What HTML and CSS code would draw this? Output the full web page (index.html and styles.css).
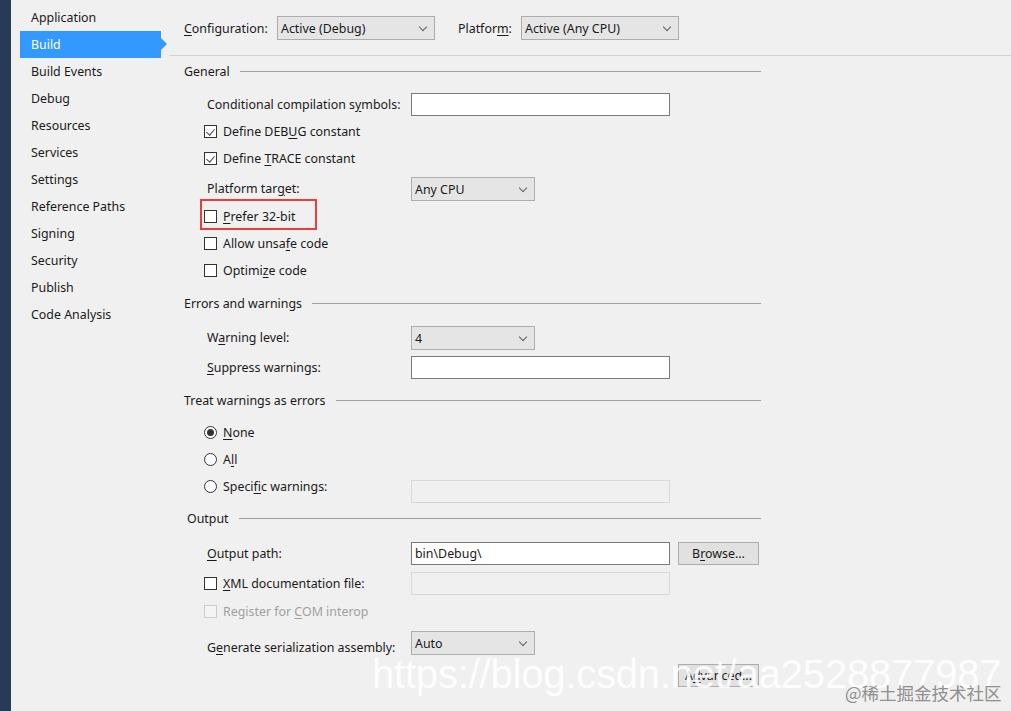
FILE: index.html
```html
<!DOCTYPE html>
<html lang="en">
<head>
  <meta charset="UTF-8">
  <title>Build</title>
  <link rel="stylesheet" href="styles.css">
</head>
<body>
  <div class="rail"></div>

  <ul class="nav">
    <li>Application</li>
    <li class="on">Build</li>
    <li>Build Events</li>
    <li>Debug</li>
    <li>Resources</li>
    <li>Services</li>
    <li>Settings</li>
    <li>Reference Paths</li>
    <li>Signing</li>
    <li>Security</li>
    <li>Publish</li>
    <li>Code Analysis</li>
  </ul>

  <div class="main">
    <div class="toolbar">
      <span class="lbl-conf"><u>C</u>onfiguration:</span>
      <div class="select wide">Active (Debug)<i class="chev"></i></div>
      <span class="lbl-plat">Platfor<u>m</u>:</span>
      <div class="select wide">Active (Any CPU)<i class="chev"></i></div>
    </div>
    <div class="divider"></div>

    <div class="head first">General</div>
    <div class="row gap6">
      <span class="lbl">Conditional compilation s<u>y</u>mbols:</span>
      <div class="input"></div>
    </div>
    <div class="row chk"><span class="box checked"></span><span>Define DEB<u>U</u>G constant</span></div>
    <div class="row chk"><span class="box checked"></span><span>Define <u>T</u>RACE constant</span></div>
    <div class="row gap3">
      <span class="lbl">Platform tar<u>g</u>et:</span>
      <div class="select">Any CPU<i class="chev"></i></div>
    </div>
    <div class="row chk gap1"><span class="flag"><span class="box"></span><span><u>P</u>refer 32-bit</span></span></div>
    <div class="row chk"><span class="box"></span><span>Allow unsa<u>f</u>e code</span></div>
    <div class="row chk"><span class="box"></span><span>Optimi<u>z</u>e code</span></div>

    <div class="head gap6">Errors and warnings</div>
    <div class="row gap7">
      <span class="lbl">W<u>a</u>rning level:</span>
      <div class="select">4<i class="chev"></i></div>
    </div>
    <div class="row gap3">
      <span class="lbl"><u>S</u>uppress warnings:</span>
      <div class="input"></div>
    </div>

    <div class="head gap6">Treat warnings as errors</div>
    <div class="row chk gap5"><span class="radio checked"></span><span><u>N</u>one</span></div>
    <div class="row chk"><span class="radio"></span><span>A<u>l</u>l</span></div>
    <div class="row chk">
      <span class="lbl-chk"><span class="radio"></span><span>Speci<u>f</u>ic warnings:</span></span>
      <div class="input off low"></div>
    </div>

    <div class="head out gap5">Output</div>
    <div class="row gap8">
      <span class="lbl"><u>O</u>utput path:</span>
      <div class="input">bin\Debug\</div>
      <div class="btn">B<u>r</u>owse...</div>
    </div>
    <div class="row chk gap3">
      <span class="lbl-chk"><span class="box"></span><span><u>X</u>ML documentation file:</span></span>
      <div class="input off"></div>
    </div>
    <div class="row chk gap1 dim"><span class="box off"></span><span>Register for <u>C</u>OM interop</span></div>
    <div class="row gap4">
      <span class="lbl low">G<u>e</u>nerate serialization assembly:</span>
      <div class="select">Auto<i class="chev"></i></div>
    </div>
    <div class="row gap6 right">
      <div class="btn">A<u>d</u>vanced...</div>
    </div>
  </div>

  <div class="watermark">https://blog.csdn.net/aa2528877987</div>
  <div class="credit">@稀土掘金技术社区</div>
</body>
</html>
```

FILE: styles.css
```css
* { margin: 0; padding: 0; box-sizing: border-box; }

body {
  width: 1011px;
  height: 711px;
  overflow: hidden;
  display: flex;
  background: #f0f0f0;
  color: #1a1a1a;
  font-family: "Noto Sans", "Noto Sans CJK SC", sans-serif;
  font-size: 12.4px;
  position: relative;
}

u { text-underline-offset: 2px; }

.rail {
  width: 11px;
  background: #283a56;
  flex: none;
}

/* left navigation */
.nav {
  list-style: none;
  width: 159px;
  flex: none;
  padding: 4px 0 0 9px;
}
.nav li {
  height: 27px;
  line-height: 27px;
  width: 141px;
  padding-left: 11px;
  position: relative;
}
.nav li.on {
  background: #3399ff;
  color: #fff;
}
.nav li.on:after {
  content: '';
  position: absolute;
  right: -6px;
  top: 7px;
  border-left: 6px solid #3399ff;
  border-top: 6px solid transparent;
  border-bottom: 6px solid transparent;
}

/* property page */
.main {
  flex: 1;
  display: flex;
  flex-direction: column;
}

.toolbar {
  display: flex;
  align-items: center;
  padding: 16px 0 0 14px;
}
.lbl-conf { width: 93px; }
.lbl-plat { width: 63px; margin-left: 23px; }

.divider {
  margin-top: 15px;
  height: 1px;
  background: #d2d2d2;
}

.head {
  height: 27px;
  width: 591px;
  padding-left: 14px;
  display: flex;
  align-items: center;
  gap: 10px;
}
.head:after {
  content: '';
  flex: 1;
  height: 1px;
  background: #a0a0a0;
}
.head.first { margin-top: 2px; }
.head.out { padding-left: 17px; }

.row {
  height: 27px;
  display: flex;
  align-items: center;
  padding-left: 37px;
}
.row.chk { padding-left: 34px; }
.row.right { padding-left: 508px; }
.row.dim { color: #a0a0a0; }

.gap1 { margin-top: 1px; }
.gap3 { margin-top: 3px; }
.gap4 { margin-top: 4px; }
.gap5 { margin-top: 5px; }
.gap6 { margin-top: 6px; }
.gap7 { margin-top: 7px; }
.gap8 { margin-top: 8px; }

.lbl { width: 204px; flex: none; }
.lbl-chk { width: 207px; flex: none; display: flex; align-items: center; }
.low { margin-top: 10px; }

/* controls */
.select {
  position: relative;
  width: 124px;
  height: 24px;
  line-height: 23px;
  padding-left: 3px;
  background: #e5e5e5;
  border: 1px solid #adadad;
}
.select.wide { width: 158px; }
.chev {
  position: absolute;
  right: 8px;
  top: 7px;
  width: 6px;
  height: 6px;
  border-right: 1px solid #606060;
  border-bottom: 1px solid #606060;
  transform: rotate(45deg);
}

.input {
  width: 259px;
  height: 23px;
  line-height: 21px;
  padding-left: 3px;
  background: #fff;
  border: 1px solid #7a7a7a;
}
.input.off {
  background: #f0f0f0;
  border-color: #d9d9d9;
}

.btn {
  width: 81px;
  height: 23px;
  margin-left: 8px;
  line-height: 21px;
  text-align: center;
  background: #e1e1e1;
  border: 1px solid #adadad;
}
.row.right .btn { margin-left: 0; }

.box {
  width: 13px;
  height: 13px;
  margin-right: 6px;
  flex: none;
  border: 1px solid #333;
  background: #fff;
  position: relative;
}
.box.checked:after {
  content: '';
  position: absolute;
  left: 3px;
  top: 1px;
  width: 4px;
  height: 7px;
  border-right: 1px solid #444;
  border-bottom: 1px solid #444;
  transform: rotate(40deg);
}
.box.off {
  border-color: #cccccc;
  background: #f4f4f4;
}

.radio {
  width: 13px;
  height: 13px;
  margin-right: 6px;
  flex: none;
  border: 1px solid #333;
  border-radius: 50%;
  background: #fff;
  position: relative;
}
.radio.checked:after {
  content: '';
  position: absolute;
  left: 2px;
  top: 2px;
  width: 7px;
  height: 7px;
  border-radius: 50%;
  background: #333;
}

/* red annotation frame */
.flag {
  display: flex;
  align-items: center;
  position: relative;
}
.flag:after {
  content: '';
  position: absolute;
  left: -4px;
  top: -9px;
  width: 113px;
  height: 27px;
  border: 2px solid #ee3b3b;
}

/* screenshot watermarks */
.watermark {
  position: absolute;
  left: 372px;
  top: 652px;
  font-family: "Liberation Sans", sans-serif;
  font-size: 40px;
  letter-spacing: -0.2px;
  color: rgba(255, 255, 255, 0.88);
  white-space: nowrap;
}
.credit {
  position: absolute;
  left: 845px;
  top: 680px;
  font-family: "Noto Sans CJK SC", sans-serif;
  font-size: 17.5px;
  color: #8f8f8f;
  white-space: nowrap;
}
```
